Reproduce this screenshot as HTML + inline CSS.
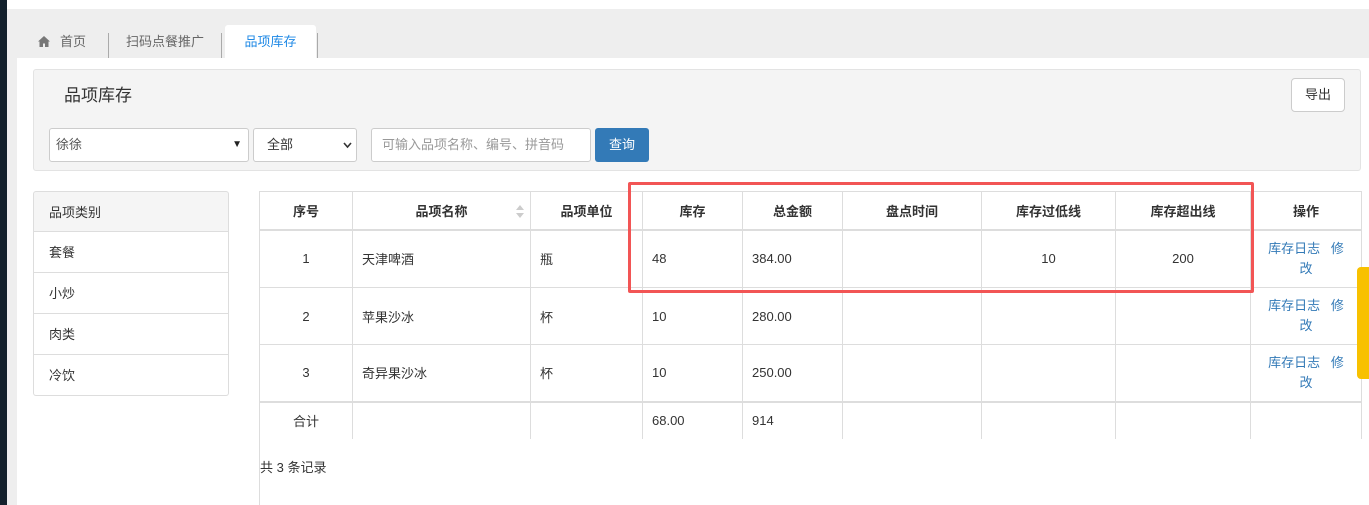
<!DOCTYPE html>
<html><head><meta charset="utf-8"><style>
*{box-sizing:border-box;margin:0;padding:0}
body{width:1369px;height:505px;overflow:hidden;background:#fff;font-family:"Liberation Sans","Noto Sans CJK SC",sans-serif;font-size:13px;color:#333;position:relative}
.abs{position:absolute}
.tab{position:absolute;top:25px;height:33px;line-height:33px;color:#666;font-size:13px}
.sep{position:absolute;top:33px;width:1px;height:25px;background:#aaa}
table{border-collapse:collapse;position:absolute;left:259px;top:191px;width:1102px;table-layout:fixed}
td,th{border:1px solid #ddd;font-size:13px}
th{height:38px;font-weight:bold;border-bottom:2px solid #ddd;position:relative}
td{text-align:left;padding-left:9px}
td.c{text-align:center;padding-left:0}
.op{color:#337ab7;text-align:center;padding:0;line-height:20px}
.li{position:absolute;left:33px;width:196px;height:41px;line-height:41px;padding-left:15px;border:1px solid #ddd;border-top:none;background:#fff}
</style></head><body>
<div class="abs" style="left:0;top:0;width:7px;height:505px;background:#13202c"></div>
<div class="abs" style="left:7px;top:9px;width:1362px;height:496px;background:#eee"></div>
<div class="abs" style="left:17px;top:58px;width:1352px;height:447px;background:#fff"></div>
<svg class="abs" style="left:38px;top:36px" width="12" height="11" viewBox="0 0 12 11"><path d="M6 0L0 5.5h1.5V11h3.5V7.5h2V11h3.5V5.5H12z" fill="#777"/></svg>
<div class="tab" style="left:60px">首页</div>
<div class="sep" style="left:108px"></div>
<div class="tab" style="left:126px">扫码点餐推广</div>
<div class="sep" style="left:221px"></div>
<div class="abs" style="left:225px;top:25px;width:91px;height:34px;background:#fff;border-radius:3px 3px 0 0;color:#1e88e5;text-align:center;line-height:33px">品项库存</div>
<div class="sep" style="left:317px"></div>
<div class="abs" style="left:33px;top:69px;width:1328px;height:102px;background:#f4f4f4;border:1px solid #e3e3e3;border-radius:3px"></div>
<div class="abs" style="left:64px;top:81px;font-size:17px;color:#333">品项库存</div>
<div class="abs" style="left:1291px;top:78px;width:54px;height:34px;border:1px solid #ccc;border-radius:4px;background:#fff;text-align:center;line-height:32px">导出</div>
<div class="abs" style="left:49px;top:128px;width:200px;height:34px;border:1px solid #ccc;border-radius:3px;background:#fff;line-height:32px;padding-left:6px;color:#555">徐徐<span style="position:absolute;right:6px;font-size:10px;color:#222">&#9660;</span></div>
<div class="abs" style="left:253px;top:128px;width:104px;height:34px;border:1px solid #ccc;border-radius:3px;background:#fff;line-height:32px;padding-left:13px;color:#333">全部<svg style="position:absolute;right:4px;top:13px" width="9" height="7" viewBox="0 0 9 7"><path d="M1 1l3.5 4L8 1" stroke="#333" stroke-width="1.6" fill="none"/></svg></div>
<div class="abs" style="left:371px;top:128px;width:220px;height:34px;border:1px solid #ccc;border-radius:3px;background:#fff;line-height:32px;padding-left:10px;color:#999;white-space:nowrap;overflow:hidden">可输入品项名称、编号、拼音码</div>
<div class="abs" style="left:595px;top:128px;width:54px;height:34px;border-radius:3px;background:#337ab7;color:#fff;text-align:center;line-height:34px">查询</div>
<div class="li" style="top:191px;border-top:1px solid #ddd;background:#f5f5f5;border-radius:3px 3px 0 0">品项类别</div>
<div class="li" style="top:232px">套餐</div>
<div class="li" style="top:273px">小炒</div>
<div class="li" style="top:314px">肉类</div>
<div class="li" style="top:355px;border-radius:0 0 3px 3px">冷饮</div>
<table>
<colgroup><col style="width:93px"><col style="width:178px"><col style="width:112px"><col style="width:100px"><col style="width:100px"><col style="width:139px"><col style="width:134px"><col style="width:135px"><col style="width:111px"></colgroup>
<tr><th>序号</th><th>品项名称<svg style="position:absolute;right:6px;top:13px" width="8" height="13" viewBox="0 0 8 13"><path d="M4 0L8 5H0z M4 13L8 8H0z" fill="#ccc"/></svg></th><th>品项单位</th><th>库存</th><th>总金额</th><th>盘点时间</th><th>库存过低线</th><th>库存超出线</th><th>操作</th></tr>
<tr style="height:58px"><td class="c">1</td><td>天津啤酒</td><td>瓶</td><td>48</td><td>384.00</td><td></td><td class="c">10</td><td class="c">200</td><td class="op">库存日志&nbsp;&nbsp; 修<br>改</td></tr>
<tr style="height:57px"><td class="c">2</td><td>苹果沙冰</td><td>杯</td><td>10</td><td>280.00</td><td></td><td></td><td></td><td class="op">库存日志&nbsp;&nbsp; 修<br>改</td></tr>
<tr style="height:57px"><td class="c">3</td><td>奇异果沙冰</td><td>杯</td><td>10</td><td>250.00</td><td></td><td></td><td></td><td class="op">库存日志&nbsp;&nbsp; 修<br>改</td></tr>
<tr style="height:37px;border-top:2px solid #ddd"><td class="c" style="border-bottom:none">合计</td><td style="border-bottom:none"></td><td style="border-bottom:none"></td><td style="border-bottom:none">68.00</td><td style="border-bottom:none">914</td><td style="border-bottom:none"></td><td style="border-bottom:none"></td><td style="border-bottom:none"></td><td style="border-bottom:none"></td></tr>
</table>
<div class="abs" style="left:259px;top:438px;width:1px;height:67px;background:#ddd"></div>
<div class="abs" style="left:260px;top:457px">共 3 条记录</div>
<div class="abs" style="left:628px;top:182px;width:626px;height:111px;border:3px solid #f25555;border-radius:2px"></div>
<div class="abs" style="left:1357px;top:267px;width:12px;height:112px;background:#f8c100;border-radius:4px 0 0 4px"></div>
</body></html>
